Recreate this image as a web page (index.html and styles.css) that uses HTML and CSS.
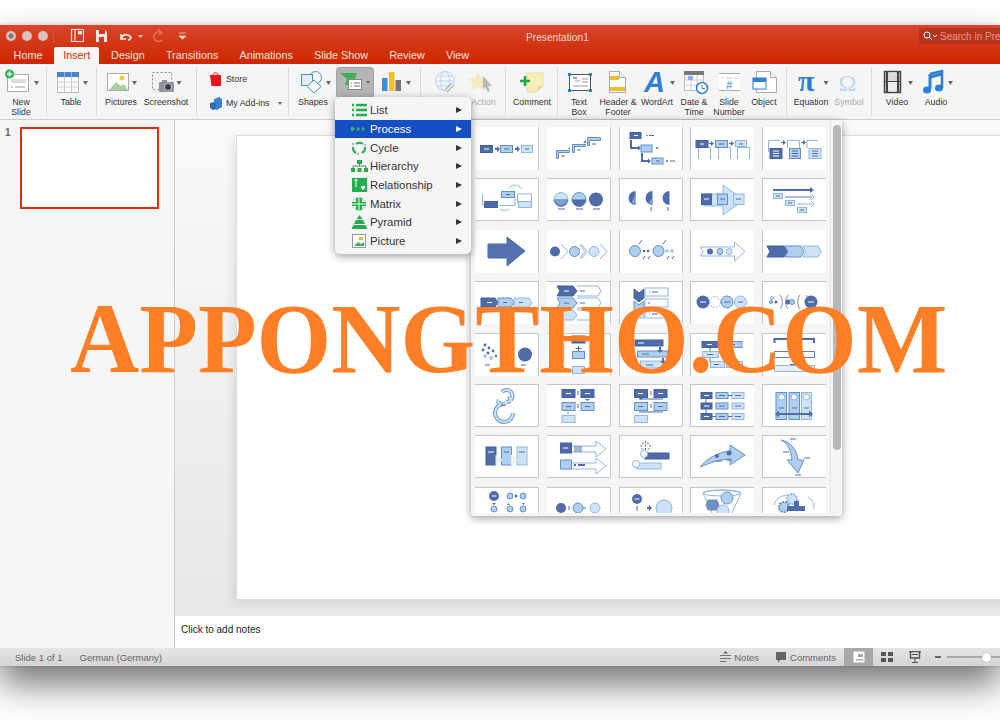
FILE: index.html
```html
<!DOCTYPE html>
<html lang="en">
<head>
<meta charset="utf-8">
<title>Presentation1</title>
<link rel="stylesheet" href="styles.css">
</head>
<body>
<div class="app">
  <header class="head">
    <div class="titlebar">
      <div class="lights"><span class="light first"></span><span class="light"></span><span class="light"></span></div>
      <span class="tsep"></span>
      <svg class="qat" width="125" height="22" viewBox="0 0 125 22">
        <path d="M1.500 4.500h12v12h-12z" fill="none" stroke="#fbe6e0" stroke-width="1.200"/><path d="M5 4v13" stroke="#fbe6e0" stroke-width="1.200"/><path d="M8 6h4v4l-2-1-2 1z" fill="#fbe6e0"/>
        <path d="M26 5h9l2 2v10H26z" fill="#fbe6e0"/><path d="M29 5h6v4h-6z" fill="#d3391c"/><path d="M29 12h5v5h-5z" fill="#d3391c"/>
        <path d="M52 15c-1-4 3-7 7-4.500l2 1.500M51 9v5h5" fill="none" stroke="#fbe6e0" stroke-width="1.700"/><path d="M58 15c1 0 3-1 3-3" fill="none" stroke="#fbe6e0" stroke-width="1.700"/>
        <path d="M68 10h5l-2.500 3z" fill="#f3c4b8"/>
        <path d="M92 8c-5-3-9 1-8 5 1 3 5 5 8 2M88 4l4 4-4 2" fill="none" stroke="#e4775d" stroke-width="1.300"/>
        <path d="M109 8h7M109 11h7l-3.500 3z" fill="#f7dcd5" stroke="#f7dcd5" stroke-width=".7"/>
      </svg>
      <span class="doctitle">Presentation1</span>
      <div class="search">
        <svg width="15" height="10" viewBox="0 0 15 10"><circle cx="4" cy="4" r="3" fill="none" stroke="#fff"/><path d="M6 6l3 3" stroke="#fff"/><path d="M10 4l2 2 2-2" fill="none" stroke="#fff"/></svg>
        <span>Search in Presentation</span>
      </div>
    </div>
    <nav class="tabs">
      <span class="tab">Home</span>
      <span class="tab on">Insert</span>
      <span class="tab">Design</span>
      <span class="tab">Transitions</span>
      <span class="tab">Animations</span>
      <span class="tab">Slide Show</span>
      <span class="tab">Review</span>
      <span class="tab">View</span>
    </nav>
  </header>

  <section class="ribbon">
    <div class="g w47">
      <div class="rb w42">
        <svg class="ico" width="42" height="34" viewBox="0 0 42 34"><rect x="7.500" y="10.500" width="21" height="17" fill="#fff" stroke="#aaa"/><rect x="11" y="15" width="15" height="4" fill="#ddd"/><path d="M11 23h2M15 23h10" stroke="#999"/><circle cx="9.500" cy="10" r="4.500" fill="#2cb34e"/><path d="M9.500 7.500v5M7 10h5" stroke="#fff" stroke-width="1.500"/><path class="caret" d="M34 17h5l-2.500 4z"/></svg>
        <span class="lb">New<br>Slide</span>
      </div>
    </div>
    <div class="g w50">
      <div class="rb w48">
        <svg class="ico" width="48" height="34" viewBox="0 0 48 34"><rect x="10.500" y="8.500" width="21" height="20" fill="#fff" stroke="#bbb"/><rect x="10" y="8" width="22" height="5" fill="#4d83c9"/><path d="M17.500 13v15M24.500 13v15M10 18h22M10 23h22" stroke="#ccc"/><path d="M17.500 8v5M24.500 8v5" stroke="#8fb4e0"/><path class="caret" d="M36 17h5l-2.500 4z"/></svg>
        <span class="lb">Table</span>
      </div>
    </div>
    <div class="g w100">
      <div class="rb w48">
        <svg class="ico" width="48" height="34" viewBox="0 0 48 34"><rect x="10.500" y="9.500" width="21" height="17" fill="#fff" stroke="#aaa"/><path d="M12 26l7-8 5 4 3-2 4 6z" fill="#a5d29c"/><circle cx="25" cy="14" r="2.500" fill="#f2c43f"/><path class="caret" d="M35 17h5l-2.500 4z"/></svg>
        <span class="lb">Pictures</span>
      </div>
      <div class="rb w42">
        <svg class="ico" width="42" height="34" viewBox="0 0 42 34"><rect x="7.500" y="8.500" width="19" height="17" fill="none" stroke="#888" stroke-dasharray="2 2"/><rect x="14" y="18" width="15" height="10" rx="1" fill="#8e949b"/><rect x="17" y="16" width="5" height="3" fill="#8e949b"/><circle cx="23" cy="23" r="3.500" fill="#33363a" stroke="#ccc"/><path class="caret" d="M31.500 17h5l-2.500 4z"/></svg>
        <span class="lb">Screenshot</span>
      </div>
    </div>
    <div class="g w92 stack">
      <div class="row">
        <svg width="14" height="15" viewBox="0 0 14 15"><path d="M1 3h11v11H2.500z" fill="#e8141c"/><path d="M4 3c0-3 5-3 5 0" fill="none" stroke="#e8141c"/></svg>
        <span class="lb">Store</span>
      </div>
      <div class="row">
        <svg width="14" height="15" viewBox="0 0 14 15"><path d="M5 3l5-2 3 2v8l-5 3-3-2z" fill="#3d84d0"/><path d="M1 7l4-1 2 2v5l-3 1-3-2z" fill="#2f6db5"/></svg>
        <span class="lb">My Add-ins</span>
        <svg class="tiny" width="5" height="3" viewBox="0 0 5 3"><path class="caret" d="M0 0h4l-2 3z"/></svg>
      </div>
    </div>
    <div class="g w132">
      <div class="rb w48">
        <svg class="ico" width="48" height="34" viewBox="0 0 48 34"><circle cx="26.500" cy="13.500" r="6" fill="#fff" stroke="#4d8bd0"/><rect x="12.500" y="10.500" width="11" height="11" fill="#e3effb" stroke="#4d8bd0"/><path d="M25 16l7 6.500-7 6.500-7-6.500z" fill="#fff" stroke="#4d8bd0"/><path class="caret" d="M37 17h5l-2.500 4z"/></svg>
        <span class="lb">Shapes</span>
      </div>
      <div class="rb w36">
        <svg class="ico" width="36" height="34" viewBox="0 0 36 34"><rect x="-.5" y="3.500" width="37" height="30" rx="3" fill="#b4b5b4" stroke="#a2a3a2"/><path d="M3 9h17l-2 6 2 6H8l2-6z" fill="#3fae5a"/><rect x="11.500" y="15.500" width="13" height="10" fill="#fff" stroke="#888"/><path d="M14 19h1M17 19h6M14 22h1M17 22h6" stroke="#777"/><path class="caret" d="M29 17h4l-2 3z"/></svg>
      </div>
      <div class="rb w42 gapl">
        <svg class="ico" width="42" height="34" viewBox="0 0 42 34"><rect x="9" y="14" width="5.500" height="13" fill="#3c8ce0"/><rect x="16" y="8" width="5.500" height="19" fill="#f4bf2e"/><rect x="22.500" y="16" width="5.500" height="11" fill="#757575"/><path class="caret" d="M33 17h5l-2.500 4z"/></svg>
      </div>
    </div>
    <div class="g w85">
      <div class="rb w46">
        <svg class="ico" width="46" height="34" viewBox="0 0 46 34"><circle cx="24" cy="17" r="9.500" fill="#f4f8fd" stroke="#bcd3ef"/><ellipse cx="24" cy="17" rx="4.500" ry="9.500" fill="none" stroke="#bcd3ef"/><path d="M15 17h18M16 12h16M16 22h16" stroke="#bcd3ef"/><path d="M25 27l7-7" stroke="#b3b3b3" stroke-width="4"/><path d="M25 27l7-7" stroke="#f5f5f5" stroke-width="1.500"/></svg>
      </div>
      <div class="rb w33">
        <svg class="ico" width="33" height="34" viewBox="0 0 33 34"><path d="M11 7l3 7 7 .500-5 5 2 7-7-4-7 4 2-7-5-5 7-.500z" fill="#f6eac0"/><path d="M16 12l9 10h-4l2 5-2 1-3-5-2 2z" fill="#b8b8b8"/></svg>
        <span class="lb dim">Action</span>
      </div>
    </div>
    <div class="g w52">
      <div class="rb w52in">
        <svg class="ico" width="52" height="34" viewBox="0 0 52 34"><path d="M21 9h16v13l-6 6H21z" fill="#f6edb9" stroke="#e6dda3"/><path d="M31 28l1-6h5z" fill="#e3d98f"/><path d="M19 12v10M14 17h10" stroke="#22a845" stroke-width="2.500"/></svg>
        <span class="lb">Comment</span>
      </div>
    </div>
    <div class="g w229">
      <div class="rb w42">
        <svg class="ico" width="42" height="34" viewBox="0 0 42 34"><rect x="11.500" y="10.500" width="21" height="16" fill="#fff" stroke="#555"/><path d="M17 17h5M24 15h6M24 18h6M15 22h15" stroke="#999"/><path d="M15 14h4" stroke="#444"/><g fill="#2f7fd3"><rect x="10" y="9" width="3" height="3"/><rect x="31" y="9" width="3" height="3"/><rect x="10" y="25" width="3" height="3"/><rect x="31" y="25" width="3" height="3"/></g></svg>
        <span class="lb">Text<br>Box</span>
      </div>
      <div class="rb w36">
        <svg class="ico" width="36" height="34" viewBox="0 0 36 34"><path d="M9.500 7.500h10l6 6v15h-16z" fill="#fff" stroke="#aaa"/><path d="M19.500 7.500v6h6" fill="#eee" stroke="#aaa"/><rect x="10" y="12" width="9" height="4" fill="#eebb33"/><rect x="10" y="23" width="15" height="4" fill="#eebb33"/></svg>
        <span class="lb">Header &amp;<br>Footer</span>
      </div>
      <div class="rb w42">
        <svg class="ico" width="42" height="34" viewBox="0 0 42 34"><text class="wa" x="8" y="28">A</text><path class="caret" d="M34 17h5l-2.500 4z"/></svg>
        <span class="lb">WordArt</span>
      </div>
      <div class="rb w32">
        <svg class="ico" width="32" height="34" viewBox="0 0 32 34"><rect x="6.500" y="8.500" width="19" height="18" fill="#fff" stroke="#bbb"/><rect x="6" y="7" width="20" height="4" fill="#777"/><path d="M13 11v15M19 11v15M6 16h20M6 21h20" stroke="#ccc"/><rect x="10" y="12" width="5" height="4" fill="#7fb2e8"/><circle cx="24" cy="24" r="5.500" fill="#fff" stroke="#2f7fd3" stroke-width="1.500"/><path d="M24 21v3.500h3" fill="none" stroke="#2f7fd3"/></svg>
        <span class="lb">Date &amp;<br>Time</span>
      </div>
      <div class="rb w38">
        <svg class="ico" width="38" height="34" viewBox="0 0 38 34"><rect x="9" y="9" width="21" height="18" fill="#fff"/><path d="M9 9.500h21" stroke="#aaa"/><path d="M9 26.500h21" stroke="#aaa"/><path d="M12 14h2M16 14h6M24 14h4" stroke="#ccc"/><text class="hash" x="16" y="25">#</text></svg>
        <span class="lb">Slide<br>Number</span>
      </div>
      <div class="rb w32">
        <svg class="ico" width="32" height="34" viewBox="0 0 32 34"><path d="M8.500 7.500h14l6 6v15h-20z" fill="#fff" stroke="#aaa"/><path d="M22.500 7.500v6h6" fill="#eee" stroke="#aaa"/><rect x="5" y="14" width="13" height="11" fill="#fff" stroke="#2f7fd3"/><rect x="5" y="14" width="13" height="4" fill="#2f7fd3"/></svg>
        <span class="lb">Object</span>
      </div>
    </div>
    <div class="g w85">
      <div class="rb w48">
        <svg class="ico" width="48" height="34" viewBox="0 0 48 34"><text class="pi" x="11" y="27">π</text><path class="caret" d="M36.500 17h5l-2.500 4z"/></svg>
        <span class="lb">Equation</span>
      </div>
      <div class="rb w28">
        <svg class="ico" width="28" height="34" viewBox="0 0 28 34"><text class="om" x="3.500" y="27">Ω</text></svg>
        <span class="lb dim">Symbol</span>
      </div>
    </div>
    <div class="g">
      <div class="rb w50">
        <svg class="ico" width="50" height="34" viewBox="0 0 50 34"><rect x="12.500" y="7.500" width="16" height="21" fill="#fff" stroke="#444" stroke-width="1.500"/><path d="M15 7v21M26 7v21" stroke="#444" stroke-width="2.500"/><path d="M12 17.500h17" stroke="#444"/><rect x="16" y="9" width="9" height="8" fill="#d9d9d9"/><rect x="16" y="18" width="9" height="9" fill="#ececec"/><path class="caret" d="M36 17h5l-2.500 4z"/></svg>
        <span class="lb">Video</span>
      </div>
      <div class="rb w28">
        <svg class="ico" width="28" height="34" viewBox="0 0 28 34"><path d="M8 10l12-3v17" fill="none" stroke="#2f7fd3" stroke-width="2.500"/><path d="M8 10v15M8 13l12-3" fill="none" stroke="#2f7fd3" stroke-width="3"/><ellipse cx="5" cy="26" rx="4" ry="3.500" fill="#2f7fd3"/><ellipse cx="17" cy="24" rx="4" ry="3.500" fill="#2f7fd3"/><path class="caret" d="M26 17h5l-2.500 4z"/></svg>
        <span class="lb">Audio</span>
      </div>
    </div>
  </section>

  <main class="main">
    <aside class="pane">
      <span class="num">1</span>
      <div class="thumb"></div>
    </aside>
    <div class="center">
      <div class="edit"><div class="slide"></div></div>
      <div class="notes">Click to add notes</div>
    </div>
  </main>

  <footer class="status">
    <span class="st first">Slide 1 of 1</span>
    <span class="st">German (Germany)</span>
    <div class="spacer"></div>
    <svg width="11" height="12" viewBox="0 0 11 12"><path d="M5.500 0L8 2.500H3z" fill="#666"/><path d="M0 4.500h11M0 7.500h11M0 10.500h6" stroke="#777"/></svg>
    <span class="st act">Notes</span>
    <svg class="cm" width="11" height="12" viewBox="0 0 11 12"><path d="M0 1h10v8H4l-2 3V9H0z" fill="#666"/></svg>
    <span class="st act">Comments</span>
    <div class="views">
      <span class="view on"><svg width="12" height="12" viewBox="0 0 12 12"><path d="M.5 .5h11v11H.5z" fill="#fff"/><path d="M5 3h5v3H5zM3 8h7v1.500H3z" fill="#a8a8a8"/></svg></span>
      <span class="view"><svg width="12" height="10" viewBox="0 0 12 10"><path d="M0 0h5v4H0zM7 0h5v4H7zM0 6h5v4H0zM7 6h5v4H7z" fill="#555"/></svg></span>
      <span class="view"><svg width="12" height="12" viewBox="0 0 12 12"><path d="M0 .500h12" stroke="#555" stroke-width="1.500"/><path d="M1.500 1v6h9V1" fill="none" stroke="#555" stroke-width="1.500"/><path d="M3 3.500h6" stroke="#555"/><path d="M6 7v4M3 11.500h6" stroke="#555"/></svg></span>
    </div>
    <span class="minus"></span>
    <div class="slider"><span class="knob"></span></div>
  </footer>
</div>

<div class="menu">
  <div class="mi"><svg width="17" height="14" viewBox="0 0 17 14"><path d="M1 2h2M1 7h2M1 12h2M5 2h11M5 7h11M5 12h11" stroke="#24ad4c" stroke-width="2.500"/></svg><span>List</span><i class="tri"></i></div>
  <div class="mi sel"><svg width="17" height="14" viewBox="0 0 17 14"><path d="M0 5h2l2 2-2 2H0zM6 4.500l3 2.500-3 2.500zM11 4.500l3 2.500-3 2.500z" fill="#35c05a"/></svg><span>Process</span><i class="tri"></i></div>
  <div class="mi"><svg width="17" height="14" viewBox="0 0 17 14"><path d="M5 3a6 6 0 0 1 7 0M14 6a6 6 0 0 1-3 6M5 12a6 6 0 0 1-3-6" fill="none" stroke="#24ad4c" stroke-width="2"/><circle cx="14" cy="4" r="1" fill="#999"/><circle cx="2" cy="3" r="1" fill="#999"/><circle cx="7" cy="13" r="1" fill="#999"/></svg><span>Cycle</span><i class="tri"></i></div>
  <div class="mi"><svg width="17" height="14" viewBox="0 0 17 14"><path d="M6 1h5v4H6zM0 9h4v4H0zM6.500 9h4v4h-4zM13 9h4v4h-4z" fill="#24ad4c"/><path d="M8.500 5v2M2 9V7h13v2" fill="none" stroke="#777"/></svg><span>Hierarchy</span><i class="tri"></i></div>
  <div class="mi"><svg width="17" height="14" viewBox="0 0 17 14"><rect x="1" y="0" width="15" height="14" fill="#24ad4c"/><path d="M5 1v8M3.500 3L5 1l1.500 2" fill="none" stroke="#fff"/><path d="M10 8h4v2l-2 2-2-2z" fill="#fff"/></svg><span>Relationship</span><i class="tri"></i></div>
  <div class="mi"><svg width="17" height="14" viewBox="0 0 17 14"><circle cx="8" cy="7" r="6.500" fill="none" stroke="#aaa" stroke-dasharray="2 1"/><path d="M5 1h6v4h4v4h-4v4H5V9H1V5h4z" fill="#24ad4c"/><path d="M8 1v12M1 7h14" stroke="#f5f5f5"/></svg><span>Matrix</span><i class="tri"></i></div>
  <div class="mi"><svg width="17" height="14" viewBox="0 0 17 14"><path d="M8.500 0l3 4h-6zM5 5h7l2 4H3zM2.500 10h12l2 4H.5z" fill="#24ad4c"/></svg><span>Pyramid</span><i class="tri"></i></div>
  <div class="mi"><svg width="17" height="14" viewBox="0 0 17 14"><rect x="1.500" y=".5" width="13" height="13" fill="#fff" stroke="#999"/><path d="M3 12l4-4 3 2 3-2v4z" fill="#39b35a"/><rect x="8" y="3" width="4" height="3" fill="#e9b93a"/></svg><span>Picture</span><i class="tri"></i></div>
</div>

<div class="gallery">
  <div class="grid">
    <div class="c"><svg viewBox="0 0 64 43"><rect class="d" x="5.500" y="18.500" width="12" height="7"/><path class="w" d="M9 22h5"/><path class="a" d="M20 21h2v-2l3 3-3 3v-2h-2z"/><rect class="m" x="25.500" y="18.500" width="12" height="7"/><path class="k" d="M29 22h5"/><path class="a" d="M40 21h2v-2l3 3-3 3v-2h-2z"/><rect class="l" x="46.500" y="18.500" width="11" height="7"/><path class="k" d="M50 22h4"/></svg></div>
    <div class="c"><svg viewBox="0 0 64 43"><path class="m" d="M9.500 31.500v-8h13v2h-11v6z"/><path class="k" d="M14 29h4"/><path class="a" d="M21 22l2-2v2z"/><path class="m" d="M25.500 25.500v-8h13v2h-11v6z"/><path class="k" d="M30 23h4"/><path class="a" d="M36 16l3-3v3z"/><path class="m" d="M40.500 18.500v-8h13v3h-11v5z"/><path class="k" d="M45 17h4"/></svg></div>
    <div class="c"><svg viewBox="0 0 64 43"><rect class="d" x="11" y="5.500" width="11" height="6"/><path class="w" d="M15 8.500h4"/><path class="k" d="M27 8.500h1.500M30 8.500h5"/><path class="a2" d="M12 13v8h8"/><path class="a" d="M19 18.500l3 2.500-3 2.500z"/><rect class="m" x="22" y="18" width="11" height="7"/><circle class="a" cx="38" cy="21" r="1"/><path class="a2" d="M23 26v8h7"/><path class="a" d="M29 31.500l3 2.500-3 2.500z"/><rect class="m" x="33" y="31" width="11" height="6"/><path class="k" d="M37 34h4"/><circle class="a" cx="48" cy="34" r="1"/><path class="k" d="M51 34h5"/></svg></div>
    <div class="c"><svg viewBox="0 0 64 43"><path class="o" d="M8.500 32V20.500h12V32"/><rect class="d" x="6" y="13.500" width="12" height="7"/><path class="w" d="M10 17h4"/><path class="a" d="M19 16h2v-2l3 2.500-3 2.500v-2h-2z"/><path class="o" d="M28.500 32V20.500h12V32"/><rect class="m" x="25.500" y="13.500" width="12" height="7"/><path class="k" d="M29 17h5"/><path class="a" d="M39 16h2v-2l3 2.500-3 2.500v-2h-2z"/><path class="o" d="M47.500 32V20.500h12V32"/><rect class="l" x="45.500" y="13.500" width="11" height="6"/><path class="k" d="M49 17h4"/></svg></div>
    <div class="c"><svg viewBox="0 0 64 43"><path class="o" d="M6.500 25V13.500h12"/><rect class="d" x="8" y="21.500" width="12" height="10"/><path class="w" d="M11 24h6M11 26.500h6M11 29h6"/><path class="a" d="M19 15h2v-2l3 2.500-3 2.500v-2h-2z"/><path class="o" d="M25.500 21V13.500h12V21"/><rect class="m" x="27.500" y="21.500" width="11" height="10"/><path class="k" d="M30 24h6M30 26.500h6M30 29h6"/><path class="a" d="M39 15h2v-2l3 2.500-3 2.500v-2h-2z"/><path class="o" d="M45 21V13.500h11"/><rect class="l" x="47" y="21.500" width="12" height="10"/><path class="k" d="M50 24h6M50 26.500h6M50 29h6"/></svg></div>

    <div class="c"><svg viewBox="0 0 64 43"><path class="o" d="M7.500 16v11H9"/><rect class="d" x="9.500" y="23.500" width="13" height="6"/><rect class="m" x="26.500" y="13.500" width="13" height="6"/><path class="k" d="M31 16.500h4M13 26.500h4"/><path class="o" d="M40 19.500v8h-16"/><path class="o" d="M34 10c4-4 9-4 13 1"/><path class="o" d="M25 31c3 2 6 2 9 0"/><path class="o" d="M42.500 16v9"/><rect class="l" x="43.500" y="23.500" width="13" height="6"/><path class="o" d="M42.500 16h14v8"/></svg></div>
    <div class="c"><svg viewBox="0 0 64 43"><circle class="l" cx="14" cy="21.500" r="7"/><path class="a" d="M7 21.500h14a7 7 0 0 1-14 0z"/><path class="m2" d="M8 21.500h12a6 6 0 0 1-12 0z"/><circle class="m" cx="32" cy="21.500" r="7"/><path class="a" d="M25 21.500h14a7 7 0 0 1-14 0z"/><circle class="a" cx="49" cy="21.500" r="7"/><path class="k" d="M11 31h7M29 31h7M46 31h7"/></svg></div>
    <div class="c"><svg viewBox="0 0 64 43"><path class="a" d="M16.500 13a7 7 0 0 0 0 14z"/><path class="m2" d="M16.500 16l-4 9 4 1.500z"/><path class="a" d="M33.500 13a7 7 0 0 0 0 14z"/><path class="m2" d="M33.500 20l-4 5 4 1.500z"/><path class="a" d="M50.500 13a7 7 0 0 0 0 14z"/><path class="k" d="M32 29v4M49 29v4"/></svg></div>
    <div class="c"><svg viewBox="0 0 64 43"><path class="l" d="M14 16h19V7l21 15-21 15v-9H14z"/><rect class="d" x="11.500" y="16" width="10" height="10.500"/><path class="w" d="M14 21h5"/><rect class="m" x="27.500" y="16" width="10" height="10.500"/><path class="k" d="M30 21h5"/><rect class="l" x="43.500" y="16" width="10.500" height="10.500"/><path class="k" d="M46 21h5"/></svg></div>
    <div class="c"><svg viewBox="0 0 64 43"><path class="a2" d="M11 12h39"/><path class="a" d="M48 9l4 3-4 3z"/><rect class="l" x="11.500" y="15.500" width="9" height="5"/><path class="k" d="M14 18h4"/><path class="od" d="M23 19h27"/><path class="o" d="M49 16l3 3-3 3"/><rect class="l" x="23.500" y="22.500" width="9" height="5"/><path class="k" d="M26 25h4"/><path class="o" d="M35 26h15"/><path class="o" d="M49 23l3 3-3 3"/><rect class="l" x="35.500" y="29.500" width="9" height="5"/><path class="k" d="M38 32h4"/></svg></div>

    <div class="c"><svg viewBox="0 0 64 43"><path class="fat" d="M13 14h19V7l18 14-18 15v-8H13z"/></svg></div>
    <div class="c"><svg viewBox="0 0 64 43"><circle class="a" cx="8" cy="21.500" r="5"/><path class="o" d="M14 14l7 7.500-7 7.500"/><circle class="m" cx="27.500" cy="21.500" r="5"/><path class="o" d="M33 15h2l5 6.500-5 6.500h-2l5-6.500z"/><circle class="l" cx="47" cy="21.500" r="5"/><path class="o" d="M53 14l7 7.500-7 7.500"/></svg></div>
    <div class="c"><svg viewBox="0 0 64 43"><circle class="m" cx="16" cy="21" r="5.500"/><circle class="m" cx="39.500" cy="21" r="5.500"/><path class="k" d="M20 14l3-4M44 14l3-4M24 29l2-3M29 29l2-3M48 29l2-3M53 29l2-3"/><circle class="a" cx="25" cy="21" r="1.300"/><circle class="a" cx="29" cy="21" r="1.300"/><circle class="l" cx="48" cy="21" r="1.300"/><circle class="l" cx="53" cy="21" r="1.300"/></svg></div>
    <div class="c"><svg viewBox="0 0 64 43"><path class="o" d="M10.500 17h34v-5l10.500 9.500L44.500 31v-5h-34l2.500-4.500z"/><circle class="a" cx="20" cy="21.500" r="3"/><circle class="m" cx="30" cy="21.500" r="3"/><circle class="l" cx="39" cy="21.500" r="3"/></svg></div>
    <div class="c"><svg viewBox="0 0 64 43"><path class="d" d="M5 16h17l3 5.500-3 5.500H5l3-5.500z"/><path class="m" d="M23 16h16l3 5.500-3 5.500H23l3-5.500z"/><path class="l" d="M41 16h15l3 5.500-3 5.500H41l3-5.500z"/></svg></div>

    <div class="c"><svg viewBox="0 0 64 43"><path class="d" d="M6 17h14l3 4.500-3 4.500H6z"/><path class="m" d="M23 17h13l3 4.500-3 4.500H23z"/><path class="l" d="M39 17h15l3 4.500-3 4.500H39z"/><path class="w" d="M12 21.500h5"/><path class="k" d="M28 21.500h4M44 21.500h4"/></svg></div>
    <div class="c"><svg viewBox="0 0 64 43"><path class="d" d="M10 5h16l4 5-4 5H10l3-5z"/><path class="w" d="M17 10h5"/><path class="o" d="M30 5h21l3 5-3 5H30"/><path class="k" d="M33 10h5"/><path class="m" d="M10 17h16l4 5-4 5H10l3-5z"/><path class="o" d="M30 17h21l3 5-3 5H30"/><path class="k" d="M17 22h5M33 22h5"/><path class="l" d="M10 29h16l4 5-4 5H10l3-5z"/><path class="o" d="M30 29h21l3 5-3 5H30"/></svg></div>
    <div class="c"><svg viewBox="0 0 64 43"><path class="d" d="M15 8l5 4 5-4v9l-5 4-5-4z"/><path class="m" d="M15 20l5 4 5-4v8l-5 4-5-4z"/><path class="l" d="M15 31l5 4 5-4v6H15z"/><rect class="of" x="26" y="7" width="23" height="8"/><path class="k" d="M30 11h1M33 11h6"/><rect class="of" x="26" y="18" width="23" height="8"/><circle class="a" cx="30" cy="22" r=".8"/><rect class="of" x="26" y="29" width="23" height="8"/><path class="k" d="M30 33h1M33 33h6"/></svg></div>
    <div class="c"><svg viewBox="0 0 64 43"><circle class="a" cx="13" cy="21" r="6.500"/><path class="w" d="M10 21h6"/><circle cx="25" cy="21" r="5.500" class="dashc"/><circle class="m" cx="37" cy="21" r="6"/><path class="k" d="M34 21h6"/><circle class="l" cx="50.500" cy="21" r="6"/><path class="k" d="M48 21h5"/></svg></div>
    <div class="c"><svg viewBox="0 0 64 43"><circle class="l" cx="10" cy="17" r="1.500"/><circle class="a" cx="14" cy="21" r="1.500"/><circle class="m" cx="9" cy="21" r="1.500"/><path class="o2" d="M18 14c3 4 3 10 0 14M26 14c-3 4-3 10 0 14M44 14c3 4 3 10 0 14M38 14c-3 4-3 10 0 14"/><circle class="a" cx="26" cy="21" r="2.500"/><circle class="m" cx="30" cy="21" r="2.500"/><circle class="a" cx="49" cy="21" r="6.500"/><path class="w" d="M46 21h6"/></svg></div>

    <div class="c"><svg viewBox="0 0 64 43"><g class="a"><circle cx="10" cy="12" r="1.400"/><circle cx="14" cy="15" r="1.400"/><circle cx="8" cy="17" r="1.400"/><circle cx="13" cy="20" r="1.400"/><circle cx="18" cy="18" r="1.400"/><circle cx="21" cy="23" r="1.200"/></g><g class="l"><circle cx="10" cy="23" r="1.400"/><circle cx="16" cy="25" r="1.400"/></g><circle class="a" cx="50" cy="21.500" r="7"/><path class="k" d="M10 32h5M46 32h5"/></svg></div>
    <div class="c"><svg viewBox="0 0 64 43"><rect class="d" x="25" y="3" width="13" height="7"/><path class="k" d="M31.500 13v6M28.500 15.500h6M31.500 33v6M28.500 36h6"/><rect class="m" x="25.500" y="18.500" width="12" height="7"/><rect class="l" x="25.500" y="33.500" width="12" height="7"/></svg></div>
    <div class="c"><svg viewBox="0 0 64 43"><rect class="d" x="16" y="7" width="28" height="6"/><path class="w" d="M19 10h6"/><rect class="m" x="18.500" y="18" width="30" height="6"/><path class="k" d="M23 21h7"/><path class="a" d="M40 14h2v3h2l-3 3-3-3h2z"/><rect class="l" x="21.500" y="28" width="25" height="7"/><path class="k" d="M27 32h7"/><path class="a" d="M43 25h2v3h2l-3 3-3-3h2z"/></svg></div>
    <div class="c"><svg viewBox="0 0 64 43"><rect class="d" x="12" y="8.500" width="16" height="6"/><path class="w" d="M17 11.500h5"/><rect class="m" x="36" y="8.500" width="16" height="6"/><path class="k" d="M40 11.500h5M20 15v14"/><rect class="l" x="12.500" y="18.500" width="16" height="6"/><path class="k" d="M17 21.500h6"/><rect class="l" x="20.500" y="28.500" width="14" height="6"/><path class="k" d="M24 31.500h5"/><rect class="l" x="36.500" y="28.500" width="16" height="6"/></svg></div>
    <div class="c"><svg viewBox="0 0 64 43"><path class="a2" d="M12.500 10V6H52v4"/><path class="a2" d="M13 6h39"/><rect class="of" x="12.500" y="18.500" width="40" height="6"/><path class="od" d="M12.500 18.500h40v6h-40z"/><path class="k" d="M28 24h8"/><rect class="lw" x="12.500" y="32.500" width="40" height="6"/><path class="k" d="M28 31.500h8"/></svg></div>

    <div class="c"><svg viewBox="0 0 64 43"><g class="lp1"><path d="M27 8a6 6 0 1 1 9 8M36 17l-2-5M36 17l-5 1"/><path d="M30 20a9 9 0 1 0 8 9M25 21c-2-1-2-3-1-5"/></g><g class="lp2"><path d="M27 8a6 6 0 1 1 9 8M36 17l-2-5M36 17l-5 1"/><path d="M30 20a9 9 0 1 0 8 9M25 21c-2-1-2-3-1-5"/></g><path class="k" d="M26 21h5"/></svg></div>
    <div class="c"><svg viewBox="0 0 64 43"><rect class="d" x="15" y="5.500" width="13" height="8"/><rect class="d" x="34" y="5.500" width="13" height="8"/><path class="w" d="M19 9.500h5M38 9.500h5"/><path class="k" d="M31 7v4"/><rect class="m" x="15" y="18.500" width="13" height="8"/><rect class="m" x="34" y="18.500" width="13" height="8"/><path class="k" d="M19 22.500h5M38 22.500h5M31 20v4"/><path class="a" d="M38 15h5l-2.500 2z"/><rect class="l" x="15" y="31.500" width="13" height="7"/><path class="k" d="M21 28v2"/></svg></div>
    <div class="c"><svg viewBox="0 0 64 43"><rect class="d" x="15.500" y="5.500" width="13" height="8"/><rect class="d" x="35" y="5.500" width="13" height="8"/><path class="w" d="M19 9.500h5M39 9.500h5"/><path class="k" d="M32 7v4M20 15h24"/><path class="a" d="M20 14h4l-2 2z"/><rect class="m" x="15.500" y="18.500" width="13" height="8"/><rect class="m" x="35" y="18.500" width="13" height="8"/><path class="k" d="M19 22.500h5M39 22.500h5M32 20v4M20 28h24"/><rect class="l" x="15.500" y="31.500" width="13" height="7"/></svg></div>
    <div class="c"><svg viewBox="0 0 64 43"><g class="d"><rect x="11" y="8.500" width="11" height="6"/><rect x="11" y="19" width="11" height="6"/><rect x="11" y="29.500" width="11" height="6"/></g><g class="m"><rect x="26" y="8.500" width="12" height="6"/><rect x="26" y="19" width="12" height="6"/><rect x="26" y="29.500" width="12" height="6"/></g><g class="l"><rect x="42" y="8.500" width="12" height="6"/><rect x="42" y="19" width="12" height="6"/><rect x="42" y="29.500" width="12" height="6"/></g><path class="w" d="M14 11.500h5M14 22h5M14 32.500h5"/><path class="k" d="M29 11.500h6M29 22h6M29 32.500h6M45 11.500h6M45 22h6M45 32.500h6M16 15v4M16 25v4M22 32.500h4M38 11.500h4M38 32.500h4"/></svg></div>
    <div class="c"><svg viewBox="0 0 64 43"><rect class="m" x="14" y="8.500" width="10.500" height="27"/><rect class="m" x="27" y="8.500" width="10.500" height="27"/><rect class="l" x="39.500" y="8.500" width="10" height="27"/><circle class="wh" cx="19.500" cy="13" r="3"/><circle class="wh" cx="32" cy="13" r="3"/><circle class="wh" cx="44.500" cy="13" r="3"/><path class="k" d="M17 24h5M30 24h5M42 24h5"/><path class="a2" d="M14 30h36"/><path class="a" d="M17 26.500l-4 3.500 4 3.500zM47 26.500l4 3.500-4 3.500z"/></svg></div>

    <div class="c"><svg viewBox="0 0 64 43"><rect class="d" x="11" y="12" width="10" height="18"/><rect class="m" x="26.500" y="12" width="10" height="18"/><rect class="l" x="42" y="12" width="10" height="18"/><path class="w" d="M13 17h6"/><path class="k" d="M29 17h5M44 17h6"/><path class="wh2" d="M21 20l6 5-6 5zM36.500 20l6 5-6 5z"/></svg></div>
    <div class="c"><svg viewBox="0 0 64 43"><path class="o" d="M24 11h25V6l10 8-10 8v-5H24z"/><rect class="d" x="13.500" y="8" width="11" height="10"/><path class="w" d="M16 13h5"/><path class="k" d="M27 12h8M27 14h8M27 16h8"/><path class="o" d="M24 28h25v-5l10 8-10 8v-5H24z"/><rect class="m" x="13.500" y="25" width="11" height="9"/><path class="a2" d="M27 30h2M31 30h7"/></svg></div>
    <div class="c"><svg viewBox="0 0 64 43"><path class="k2" d="M25 8c-4 0-4 6 0 7M28 8c4 0 4 6 0 7M26.500 6v10"/><rect class="d" x="26" y="18" width="24" height="6"/><circle class="wh" cx="25" cy="19" r="3.500"/><rect class="l" x="18" y="28" width="24" height="6"/><circle class="wh" cx="17" cy="29" r="3.500"/></svg></div>
    <div class="c"><svg viewBox="0 0 64 43"><path class="m" d="M10 32c8-10 20-15 30-16v-6l15 10-15 10v-6C30 24 20 28 10 32z"/><circle class="a" cx="27" cy="21" r="2"/><circle class="a" cx="39" cy="18" r="2.500"/><path class="k" d="M26 26h6M36 25h6"/></svg></div>
    <div class="c"><svg viewBox="0 0 64 43"><path class="m" d="M19 5c10 2 16 10 17 20h6L36 38 25 25h5C29 16 26 8 19 5z"/><path class="k" d="M28 4h6M21 17h6M42 23h6M33 40h6"/></svg></div>

    <div class="c"><svg viewBox="0 0 64 43"><circle class="a" cx="19" cy="9" r="5"/><path class="w" d="M16.500 9h5"/><circle class="m" cx="35" cy="9" r="3"/><circle class="m" cx="48" cy="9" r="3"/><path class="a" d="M40 7l3 2-3 2zM17 16h4l-2 2zM32 18h3l-1.500-2zM47 16h3l-1.500 2z"/><circle class="m" cx="19" cy="22" r="3"/><circle class="m" cx="35" cy="22" r="3"/><circle class="m" cx="48" cy="22" r="3"/></svg></div>
    <div class="c"><svg viewBox="0 0 64 43"><circle class="a" cx="14" cy="21" r="5"/><path class="k" d="M22 19v4M36 21h3"/><circle class="m" cx="31" cy="21" r="5"/><circle class="l" cx="48" cy="21" r="5"/></svg></div>
    <div class="c"><svg viewBox="0 0 64 43"><circle class="a" cx="18" cy="12" r="5"/><path class="w" d="M15.500 12h5"/><path class="k" d="M18 19v5"/><path class="a" d="M28 20h2v-2l3 3-3 3v-2h-2z"/><circle class="l" cx="45" cy="21" r="8"/></svg></div>
    <div class="c"><svg viewBox="0 0 64 43"><path class="o" d="M13 6c8-4 30-4 38 0L41 28H23z"/><ellipse class="o" cx="32" cy="6" rx="19" ry="3"/><circle class="m" cx="37" cy="11" r="6"/><path class="a3" d="M18 13h9l2 5-2 5h-9l-2-5z"/><circle class="l" cx="33" cy="24" r="6"/></svg></div>
    <div class="c"><svg viewBox="0 0 64 43"><circle class="gear" cx="30" cy="12" r="5"/><circle class="gear2" cx="22" cy="20" r="5"/><path class="a" d="M32 14h5v5h6v5H25v-5h7z"/><path class="o" d="M12 18c2-8 10-10 14-10M46 10c4 2 6 6 6 12"/></svg></div>
  </div>
  <div class="track"><span class="thumbbar"></span></div>
</div>

<div class="mark">APPONGTHO.COM</div>
</body>
</html>
```

FILE: styles.css
```css
* { box-sizing: border-box; }
html, body { margin: 0; height: 728px; overflow: hidden; background: #fff; }
body { position: relative; font-family: "Liberation Sans", Arial, sans-serif; color: #333; }
.app { margin-top: 25px; height: 641px; display: flex; flex-direction: column; box-shadow: 0 18px 34px rgba(0,0,0,.55), 0 0 4px rgba(0,0,0,.15); position: relative; }

.head { height: 39px; background: linear-gradient(#d9462c, #cf2700 95%); flex: none; }
.titlebar { height: 22px; display: flex; align-items: center; }
.lights { display: flex; gap: 6px; padding-left: 6px; width: 53px; }
.light { width: 10px; height: 10px; border-radius: 50%; background: #dcc4be; }
.light.first { background: radial-gradient(#777 0 2px, #dcc4be 3px); }
.tsep { width: 1px; height: 14px; background: #c75f4a; }
.qat { margin-left: 16px; flex: none; }
.doctitle { margin-left: 331px; width: 63px; font-size: 10.2px; color: #f6d9d2; white-space: nowrap; padding-top: 2px; }
.search { margin-left: auto; width: 81px; height: 16px; background: #b9341c; border-radius: 2px; display: flex; align-items: center; gap: 2px; padding-left: 4px; overflow: hidden; flex: none; white-space: nowrap; font-size: 10px; color: #e2978a; }
.search svg { flex: none; }

.tabs { height: 17px; display: flex; padding-left: 3px; align-items: stretch; }
.tab { padding: 0 10.6px; font-size: 10.8px; line-height: 17px; color: #fbe3dd; white-space: nowrap; }
.tab.on { background: #f6f6f6; color: #d7330f; padding: 0 8.8px; border-radius: 2px 2px 0 0; margin: 0 1.5px 0 1.4px; }

.ribbon { height: 56px; flex: none; display: flex; background: #f5f5f5; border-bottom: 1px solid #ccc; }
.g { flex: none; display: flex; height: 55px; background: linear-gradient(#dcdcdc, #dcdcdc) right 3px / 1px 49px no-repeat; }
.g:last-child { background: none; }
.w47 { width: 47px; } .w50 { width: 50px; } .w100 { width: 100px; } .w92 { width: 92px; }
.w132 { width: 132px; } .w85 { width: 85px; } .w52 { width: 52px; } .w229 { width: 229px; }
.rb { flex: none; display: flex; flex-direction: column; align-items: center; }
.w42 { width: 42px; } .w48 { width: 48px; } .w36 { width: 36px; } .w46 { width: 46px; } .w33 { width: 33px; }
.w52in { width: 52px; } .w32 { width: 32px; } .w38 { width: 38px; } .w28 { width: 28px; }
.rb.w50 { width: 50px; }
.gapl { margin-left: 0; }
.ico { display: block; overflow: visible; flex: none; }
.lb { font-size: 8.8px; line-height: 9.6px; text-align: center; color: #333; white-space: nowrap; }
.lb.dim { color: #a9a9a9; }
.caret { fill: #666; }
.stack { flex-direction: column; padding: 8px 0 0 12px; gap: 9px; }
.row { display: flex; align-items: center; gap: 3px; height: 15px; }
.row svg { flex: none; }
.row .tiny { margin-left: 5px; }
.wa { font: italic bold 29px "Liberation Sans", sans-serif; fill: #2f7fd3; }
.hash { font: italic 11px "Liberation Sans", sans-serif; fill: #2f7fd3; }
.pi { font: bold 30px "Liberation Serif", serif; fill: #2f7fd3; }
.om { font: 24px "Liberation Serif", serif; fill: #bcd6f2; }

.main { flex: 1; display: flex; min-height: 0; }
.pane { width: 175px; flex: none; background: #f6f6f6; border-right: 1px solid #c9c9c9; display: flex; padding: 7px 0 0 5px; gap: 11px; }
.num { font-size: 10px; font-weight: bold; color: #666; line-height: 12px; width: 4px; }
.thumb { width: 139px; height: 82px; background: #fff; border: 2px solid #e0300a; }
.center { flex: 1; display: flex; flex-direction: column; min-width: 0; overflow: hidden; }
.edit { height: 496px; background: linear-gradient(#fafafa, #e7e7e7); padding: 15px 0 0 61px; flex: none; }
.slide { width: 800px; height: 465px; background: #fff; border: 1px solid #ddd; border-right: 0; box-shadow: -3px 3px 10px rgba(0,0,0,.09); }
.notes { flex: 1; background: #fff; font-size: 10px; color: #222; padding: 8px 0 0 6px; }

.status { height: 18px; flex: none; display: flex; align-items: center; background: linear-gradient(#e5e5e5, #d4d4d4); overflow: hidden; }
.status svg { flex: none; }
.st { font-size: 9.5px; color: #666; white-space: nowrap; }
.st.first { margin: 0 17px 0 15px; }
.spacer { flex: 1; }
.st.act { margin-left: 3px; }
.cm { margin-left: 17px; }
.views { display: flex; margin-left: 8px; height: 18px; }
.view { width: 28px; height: 18px; display: flex; align-items: center; justify-content: center; }
.view.on { background: #a8a8a8; width: 29px; }
.minus { width: 6px; height: 2px; background: #666; margin-left: 6px; flex: none; }
.slider { width: 53px; height: 2px; background: #aaa; margin-left: 6px; flex: none; display: flex; align-items: center; padding-left: 35px; }
.knob { width: 9px; height: 9px; border-radius: 50%; background: #fff; box-shadow: 0 0 1px #777; flex: none; }

.menu { position: absolute; left: 335px; top: 97px; width: 136px; height: 157px; background: #f5f5f5; border-radius: 5px; box-shadow: 0 2px 8px rgba(0,0,0,.4); padding-top: 4px; z-index: 3; }
.mi { height: 18.7px; display: flex; align-items: center; padding-left: 15.5px; font-size: 11.4px; color: #333; }
.mi svg { flex: none; margin-right: 2.500px; }
.mi span { flex: 1; }
.mi.sel { background: #1450c4; color: #fff; }
.tri { width: 0; height: 0; border-left: 6.5px solid #333; border-top: 3.5px solid transparent; border-bottom: 3.5px solid transparent; margin-right: 9px; }
.mi.sel .tri { border-left-color: #fff; }

.gallery { position: absolute; left: 471px; top: 120px; width: 371px; height: 396px; background: #f5f5f5; box-shadow: 0 2px 8px rgba(0,0,0,.4); border-radius: 0 0 3px 3px; z-index: 2; padding: 0 0 3px 4px; display: flex; }
.grid { width: 355px; height: 393px; overflow: hidden; padding-top: 7px; display: grid; grid-template-columns: repeat(5, 64px); grid-auto-rows: 43px; column-gap: 7.75px; row-gap: 8.4px; flex: none; }
.c { background: #fff; border: 0 solid #c6c6c6; overflow: hidden; }
.c:nth-child(5n+1), .c:nth-child(5n+2) { border-right-width: 1px; }
.c:nth-child(5n+3) { border-left-width: 1px; border-right-width: 1px; }
.c:nth-child(5n+4), .c:nth-child(5n) { border-left-width: 1px; }
.c:nth-child(n+6):nth-child(-n+10) { border-top-width: 1px; border-bottom-width: 1px; }
.c:nth-child(n+16):nth-child(-n+25) { border-top-width: 1px; }
.c:nth-child(n+26):nth-child(-n+35) { border-top-width: 1px; border-bottom-width: 1px; }
.c:nth-child(n+36) { border-top-width: 1px; }
.c svg { display: block; width: 64px; height: 43px; margin: -1px 0 0 -1px; }
.c:nth-child(5n+1) svg, .c:nth-child(5n+2) svg { margin-left: 0; }
.c:nth-child(-n+5) svg, .c:nth-child(n+11):nth-child(-n+15) svg { margin-top: 0; }

.d { fill: #4f6ca9; stroke: #43609f; }
.m { fill: #b0cfee; stroke: #6490c9; }
.l { fill: #cfe3f8; stroke: #90b8e6; }
.o { fill: none; stroke: #8fb5e6; }
.o2 { fill: none; stroke: #6f8fc0; }
.od { fill: none; stroke: #5d7db8; }
.of { fill: #fff; stroke: #8fb5e6; }
.lw { fill: #e6f0fb; stroke: #8fb5e6; }
.w { stroke: #fff; fill: none; }
.k { stroke: #4f6ca9; fill: none; }
.k2 { stroke: #4f6ca9; fill: none; stroke-dasharray: 2 1.500; }
.a { fill: #4f6ca9; }
.a2 { stroke: #4f6ca9; stroke-width: 2; fill: none; }
.a3 { fill: #6f8ec4; stroke: #6f8ec4; }
.m2 { fill: #7da0d6; }
.fat { fill: #5571ae; stroke: #4f6ca9; }
.dashc { fill: #fff; stroke: #7fa6d8; stroke-dasharray: 1.500 1.500; }
.lp1 { fill: none; stroke: #6f9bd3; stroke-width: 4; }
.lp2 { fill: none; stroke: #cfe3f8; stroke-width: 2; }
.wh { fill: #fff; stroke: #8fb5e6; }
.wh2 { fill: #e8f1fb; stroke: #e8f1fb; }
.gear { fill: #cfe3f8; stroke: #90b8e6; stroke-width: 2; stroke-dasharray: 2 1; }
.gear2 { fill: #b0cfee; stroke: #6490c9; stroke-width: 2; stroke-dasharray: 2 1; }

.track { width: 12px; flex: none; border-left: 1px solid #e6e6e6; padding: 5px 0 0 2px; height: 100%; }
.thumbbar { display: block; width: 8px; height: 325px; background: #b8b8b8; border-radius: 4px; }

.mark { position: absolute; left: 70px; top: 281px; z-index: 5; font: bold 100px/115px "Liberation Serif", serif; color: #ff7f27; white-space: nowrap; transform: scaleX(.96); transform-origin: left top; }
```
